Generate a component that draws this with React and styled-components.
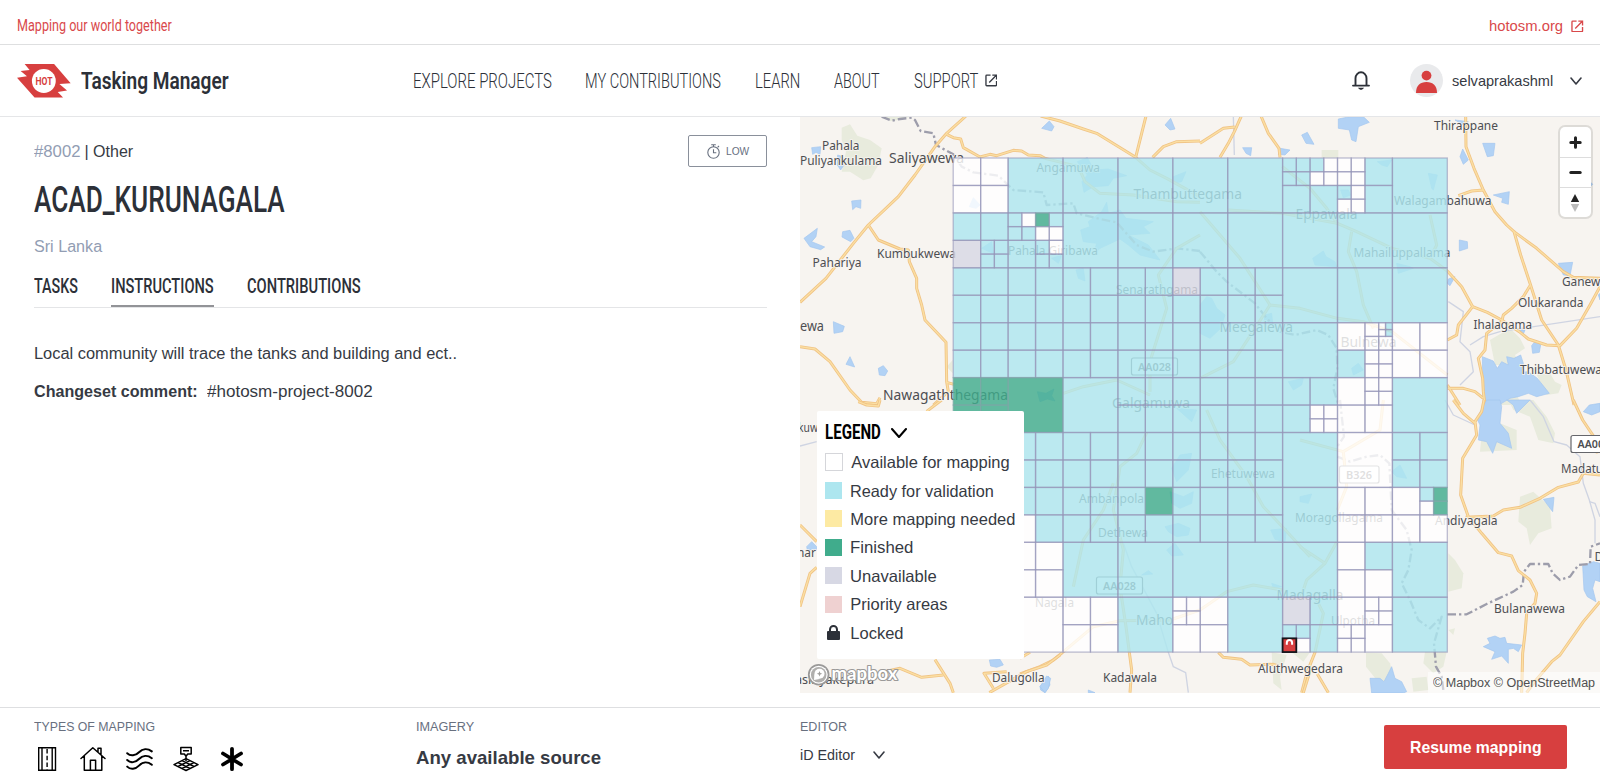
import React, { useLayoutEffect, useRef } from "react";
import styled, { createGlobalStyle } from "styled-components";

const GlobalStyle = createGlobalStyle`
  * { box-sizing: border-box; }
  body { margin: 0; background: #fff; color: #363a43; font-family: "Liberation Sans", Arial, sans-serif; overflow: hidden; }
`;

const condensed = `Roboto, "Liberation Sans", sans-serif`;

/* ---------- fitted text ---------- */
const FitBox = styled.span`
  display: block;
  flex: none;
  width: ${(p) => p.$w}px;
  height: ${(p) => p.$h || 20}px;
  line-height: ${(p) => p.$h || 20}px;
  white-space: nowrap;
  font-size: ${(p) => p.$size || 16}px;
  font-weight: ${(p) => p.$weight || 400};
  font-family: ${(p) => (p.$condensed ? condensed : "inherit")};
  color: ${(p) => p.$color || "inherit"};
`;
const FitInner = styled.span`
  display: inline-block;
  transform-origin: 0 50%;
`;
function Fit({ w, h, size, weight, narrow, color, children }) {
  const ref = useRef(null);
  useLayoutEffect(() => {
    const el = ref.current;
    el.style.transform = `scaleX(${w / el.offsetWidth})`;
  }, [w]);
  return (
    <FitBox $w={w} $h={h} $size={size} $weight={weight} $condensed={narrow} $color={color}>
      <FitInner ref={ref}>{children}</FitInner>
    </FitBox>
  );
}

/* ---------- shell ---------- */
const Page = styled.div`
  width: 1600px;
  height: 782px;
  display: flex;
  flex-direction: column;
  background: #fff;
`;
const TopBar = styled.div`
  height: 45px;
  flex: none;
  border-bottom: 1px solid #dedfe0;
  display: flex;
  align-items: center;
  justify-content: space-between;
  padding: 8px 16.5px 0 16.5px;
  color: #d9494b;
`;
const TopLink = styled.a`
  display: flex;
  align-items: center;
  gap: 8px;
`;
const Header = styled.header`
  height: 72px;
  flex: none;
  border-bottom: 1px solid #e5e6e8;
  display: flex;
  align-items: center;
  padding: 0 18px 0 17px;
`;
const Brand = styled.div`
  display: flex;
  align-items: center;
  gap: 9.5px;
  width: 395.5px;
`;
const Nav = styled.nav`
  display: flex;
  align-items: center;
  gap: 33.8px;
  flex: 1;
`;
const NavExternal = styled.span`
  display: flex;
  align-items: center;
  gap: 7px;
`;
const Account = styled.div`
  display: flex;
  align-items: center;
`;
const Avatar = styled.div`
  width: 33px;
  height: 33px;
  margin: 0 9px 0 40px;
  border-radius: 50%;
  overflow: hidden;
  background: #e9eaec;
`;
const UserChevron = styled.div`
  display: flex;
  margin-left: 17px;
`;

/* ---------- project details ---------- */
const Main = styled.main`
  display: flex;
  height: 576px;
  flex: none;
`;
const Details = styled.section`
  width: 800px;
  padding: 18px 33px 0 33.5px;
  display: flex;
  flex-direction: column;
`;
const MetaRow = styled.div`
  display: flex;
  justify-content: space-between;
  height: 32px;
  align-items: center;
`;
const Meta = styled.div`
  display: flex;
  gap: 4px;
  padding-top: 1px;
`;
const Difficulty = styled.div`
  width: 79px;
  height: 32px;
  border: 1px solid #8a909b;
  border-radius: 2px;
  display: flex;
  align-items: center;
  justify-content: center;
  gap: 6px;
`;
const TitleRow = styled.h1`
  margin: 11px 0 0;
  height: 44px;
  font-weight: 500;
`;
const Place = styled.div`
  margin-top: 15px;
  height: 20px;
`;
const Tabs = styled.div`
  display: flex;
  gap: 33.5px;
  height: 37px;
  margin-top: 14px;
  border-bottom: 1px solid #e4e5e7;
`;
const Tab = styled.div`
  height: 36px;
  padding-top: 3px;
  border-bottom: 2px solid ${(p) => (p.$active ? "#929397" : "transparent")};
`;
const Body = styled.div`
  padding-top: 36px;
  display: flex;
  flex-direction: column;
  gap: 17.5px;
`;
const Comment = styled.div`
  display: flex;
  gap: 9px;
`;

/* ---------- map ---------- */
const MapPane = styled.section`
  width: 800px;
  height: 576px;
  position: relative;
  overflow: hidden;
  background: #f7f4f0;
  svg { display: block; }
`;
const Legend = styled.div`
  position: absolute;
  left: 17px;
  top: 294px;
  width: 207px;
  height: 248px;
  background: #fff;
  border-radius: 2px;
  padding: 10px 8px;
`;
const LegendTitle = styled.div`
  display: flex;
  align-items: center;
  gap: 9.5px;
  height: 23px;
  margin-bottom: 4px;
  color: #000;
`;
const LegendRow = styled.div`
  display: flex;
  align-items: center;
  height: 28.4px;
  gap: 8.3px;
`;
const Swatch = styled.span`
  width: 17px;
  height: 17px;
  flex: none;
  background: ${(p) => p.$c};
  ${(p) => p.$outlined && "border: 1px solid #d5d6da; width: 18px; height: 18px;"}
`;
const SwatchIcon = styled.span`
  width: 17px;
  display: flex;
  justify-content: center;
`;
const Controls = styled.div`
  position: absolute;
  right: 9.5px;
  top: 10px;
  width: 31px;
  border-radius: 5px;
  background: #fff;
  box-shadow: 0 0 0 2px rgba(0, 0, 0, 0.1);
`;
const ControlButton = styled.div`
  height: 30px;
  display: flex;
  align-items: center;
  justify-content: center;
  & + & { border-top: 1px solid #ddd; }
`;
const Attribution = styled.div`
  position: absolute;
  right: 0;
  bottom: 0;
  height: 21px;
  padding: 1px 5px 0;
  background: rgba(255, 255, 255, 0.5);
`;

/* ---------- footer ---------- */
const Footer = styled.footer`
  margin-top: 14px;
  flex: 1;
  border-top: 1px solid #dedfe1;
  display: flex;
  padding: 9px 33px 0 33.5px;
`;
const FooterCol = styled.div`
  width: ${(p) => p.$w}px;
  flex: none;
`;
const TypeIcons = styled.div`
  display: flex;
  align-items: center;
  gap: 20px;
  margin-top: 9px;
`;
const Source = styled.div`
  margin-top: 8.5px;
`;
const EditorSelect = styled.div`
  display: flex;
  align-items: center;
  gap: 17px;
  margin-top: 8px;
`;
const ResumeButton = styled.button`
  width: 183px;
  height: 44px;
  margin: 7.5px 0 0 auto;
  padding: 0;
  border: 0;
  border-radius: 2px;
  background: #d73f3f;
  color: #fff;
  font-family: inherit;
  display: flex;
  align-items: center;
  justify-content: center;
`;

/* ---------- icons ---------- */
const ExternalIcon = ({ size = 12.5 }) => (
  <svg width={size} height={size} viewBox="0 0 13 13" fill="none" stroke="currentColor" strokeWidth="1.4">
    <path d="M5.8 1.2H1.8Q1 1.2 1 2V11.4Q1 12.2 1.8 12.2H11.2Q12 12.2 12 11.4V7.2M7.6 1.2H12V5.6M11.8 1.4L4.4 8.8" />
  </svg>
);
const Chevron = ({ w = 13, h = 8, sw = 1.6 }) => (
  <svg width={w} height={h} viewBox={`0 0 ${w} ${h}`} fill="none" stroke="currentColor" strokeWidth={sw} strokeLinecap="round" strokeLinejoin="round">
    <path d={`M1 1L${w / 2} ${h - 1}L${w - 1} 1`} />
  </svg>
);
const HotLogo = () => (
  <svg width="54" height="34" viewBox="0 0 163 102">
    <path fill="#d73f3f" d="M23 0H112L162 58L128 60L151 80L123 84L139 101H53L0 41L30 37L11 21L38 18Z" />
    <circle cx="81" cy="51" r="36" fill="#fff" />
    <text x="56" y="62" fontSize="32" fontWeight="700" fontFamily="Roboto" fill="#d73f3f" textLength="51" lengthAdjust="spacingAndGlyphs">HOT</text>
  </svg>
);
const BellIcon = () => (
  <svg width="18" height="20" viewBox="0 0 18 20" fill="none" stroke="#2c3038" strokeWidth="1.9" strokeLinecap="round">
    <path d="M1 14.6H17M3.5 14.3V7.2A5.5 5.9 0 0 1 14.5 7.2V14.3" />
    <path d="M7.2 17.4Q9 19.2 10.8 17.4Z" fill="#2c3038" strokeWidth="1.1" />
  </svg>
);
const PersonIcon = () => (
  <svg width="33" height="33" viewBox="0 0 33 33" fill="#d73f3f">
    <circle cx="16.5" cy="11.6" r="4.9" />
    <path d="M6 28.9C6 21.5 10 18 16.5 18S27 21.5 27 28.9Z" />
  </svg>
);
const TimerIcon = () => (
  <svg width="13" height="15" viewBox="0 0 13 15" fill="none" stroke="#68707f" strokeWidth="1.1">
    <circle cx="6.5" cy="8.5" r="5.7" />
    <path d="M4.2 .8H8.8M6.5 1V3M6.5 5.2V8.8H9.3M10.6 3.4L12 2" />
  </svg>
);
const LockIcon = () => (
  <svg width="13" height="15" viewBox="0 0 13 15">
    <rect y="6" width="13" height="9" rx="1" fill="#2c3038" />
    <path d="M3 7V4.4A3.5 3.4 0 0 1 10 4.4V7" fill="none" stroke="#2c3038" strokeWidth="2" />
  </svg>
);
const RoadIcon = () => (
  <svg width="26" height="26" viewBox="0 0 26 26" fill="none" stroke="#000" strokeWidth="1.4">
    <path d="M4.7 1.7H21.5V24.3H4.7ZM8 2V24M18.2 2V24" />
    <path d="M13.1 3V24" strokeDasharray="4.5 2.3" />
  </svg>
);
const HouseIcon = () => (
  <svg width="26" height="26" viewBox="0 0 26 26" fill="none" stroke="#000" strokeWidth="1.5" strokeLinejoin="round" strokeLinecap="round">
    <path d="M1 12.5L12.8 1.8L25 12.5M4.3 10V24.2H21.8V10M10.4 24V14.3H15.6V24M18 6V2.3H21V9" />
  </svg>
);
const WavesIcon = () => (
  <svg width="27" height="26" viewBox="0 0 27 26" fill="none" stroke="#000" strokeWidth="2" strokeLinecap="round">
    {[8, 14.8, 21.4].map((y) => (
      <path key={y} d={`M1.2 ${y - 0.8}C4.5 ${y + 2.6} 9.5 ${y + 1.8} 13 ${y - 1.8}S21.5 ${y - 6} 25.8 ${y - 2.6}`} />
    ))}
  </svg>
);
const LandUseIcon = () => (
  <svg width="26" height="26" viewBox="0 0 26 26" fill="none" stroke="#000" strokeWidth="1.5" strokeLinejoin="round">
    <path d="M7.8 1.5H18.2V8H14.7L13 10.2L11.4 8H7.8ZM10 4.7H16M13 10V15" />
    <path d="M13 12.6L25 18.6L13 24.5L1 18.6ZM9 14.6L21 20.5M5 16.6L17 22.5M17 14.6L5 20.5M21 16.6L9 22.5" />
  </svg>
);
const AsteriskIcon = () => (
  <svg width="26" height="26" viewBox="0 0 26 26" stroke="#000" strokeWidth="3.8" strokeLinecap="round">
    <path d="M13 2.8V23.2M4 7.5L22 18.5M22 7.5L4 18.5" />
  </svg>
);

/* ---------- base map data ---------- */
// each sheet of the base map is digitised at three units per pixel
const sheets = [
  {
    at: [800, 115],
    green: [
      "M125 38L150 28L172 62L210 75L245 100L235 150L212 190L190 196L150 170L125 170L138 110L125 75Z",
      "M245 3L340 3L290 16L270 18Z",
      "M440 755L458 735V775Z",
    ],
    water: [
      "M35 98L62 95L60 118L48 112L38 118Z",
      "M113 120L128 125L132 150L122 165L112 150Z",
      "M155 258L183 255L182 280L168 275L158 284Z",
      "M12 370L52 340L48 365L35 380L74 396L62 404L30 395Z",
      "M128 350L150 346L162 370L152 380L126 366Z",
      "M100 620L133 634L128 650L102 655Z",
      "M150 725L164 756L138 748Z",
      "M235 760L250 752L263 768L255 782L238 780Z",
      "M725 40L748 18L762 35L755 48Z",
      "M1095 30L1112 10L1125 42L1110 45Z",
      "M520 248L540 270L528 280L508 275Z",
      "M832 140L862 128L882 165L925 162L980 182L940 190L925 212L880 215L852 232L846 200L862 180Z",
      "M1120 185L1158 170L1145 200L1120 205Z",
      "M842 345L870 335L865 320L905 290L920 262L925 295L960 285L978 310L1060 320L1030 335L1050 355L985 360L1045 390L1080 435L1020 420L985 390L960 372L900 400L880 420L890 385L850 380Z",
      "M828 465L850 460L855 498L835 490Z",
      "M712 830L738 835L762 822L755 842L765 858L742 852L720 860Z",
      "M545 400L575 380L580 415Z",
      "M755 430L785 420L775 445Z",
    ],
    roads: [
      "M498 3L440 55L405 95L345 180L295 245L205 330L160 385L78 490L0 562",
      "M440 58L460 68L482 72L490 98L540 126L570 118L590 122L640 106L665 108L685 120L720 122L735 130",
      "M722 3L780 18L850 42L890 55L1007 127L1038 3",
      "M1058 127L1090 95L1130 80L1200 78",
      "M205 330L235 375L300 402L325 405L328 440L350 490L350 520L365 570L375 615L438 682L440 800L445 830L400 870",
      "M0 695L45 702L90 740L150 825L185 862L230 866L240 848",
      "M440 802L462 808",
      "M735 130L835 155L855 200L900 235L1000 240L1130 260L1200 262",
      "M1007 127L1050 165L1100 190L1200 245",
      "M1200 360L1130 400L1075 480L1100 580L1075 660L1050 740L1050 830",
      "M790 835L850 815L950 795L1050 840",
    ],
    borders: ["M245 5L275 17L300 12L335 8L345 15L362 48L400 55L408 90L460 118L485 155L520 172L595 182L640 225L730 232L740 270L820 265L830 295L900 312L950 322L1010 390L1060 410L1130 400L1200 408"],
    thin: [],
  },
  {
    at: [1200, 115],
    green: ["M365 105H415V128H365Z", "M870 675L930 640L960 670L975 700L945 720L960 750L885 750Z", "M1010 780L1050 775L1065 800L1085 810L1075 835L1040 840Z", "M890 850L950 840L965 870H890Z"],
    water: [
      "M415 12L450 5L490 5L508 22L475 35L468 80L455 75L448 45L415 40Z",
      "M305 60L322 52L342 88L318 85Z",
      "M128 98L155 98L152 122L138 115Z",
      "M240 100L270 105L255 120L235 118Z",
      "M765 15L805 20L790 30Z",
      "M848 85L885 85L880 122L862 125Z",
      "M788 102L805 135L790 148L780 125Z",
      "M880 240L928 230L925 268L905 262L908 250Z",
      "M778 375L802 380L803 400L778 408Z",
      "M1075 445L1118 442L1110 482L1090 480Z",
      "M745 492L765 485L750 512L742 505Z",
      "M995 692L1008 675L1022 690L1018 712L998 715Z",
      "M955 645L975 645L968 662Z",
      "M847 725L880 738L892 760L905 740L925 750L920 725L942 730L962 720L970 745L965 772L985 770L1012 790L1048 835L1010 845L985 835L955 845L930 850L905 865L900 870H850Z",
      "M338 430L370 408L378 425L405 440L410 455L345 450Z",
      "M590 445L630 455L640 460L595 475Z",
      "M685 175L712 180L700 225L695 220Z",
      "M0 570L20 545L35 550L50 580L75 600L62 640L30 670L0 655Z",
      "M195 600L215 595L218 625L192 622Z",
      "M265 800L310 790L305 810L280 825Z",
      "M422 225L445 225L452 240L430 248Z",
      "M455 760L475 745L490 765L460 780Z",
      "M532 140L575 135L562 155L545 150Z",
      "M1170 200L1178 208L1170 215Z", "M1195 540L1200 535V555Z",
    ],
    roads: [
      "M124 3L103 50L85 85L60 127", "M0 85L70 40L104 36", "M183 3L205 55L237 100L240 127",
      "M797 3L798 95L822 160L850 225L885 290L920 330L942 350L962 420L990 505L1025 615L1075 690L1098 765L1122 870",
      "M775 242L815 228L850 225", "M942 350L1010 400L1090 470L1120 487L1200 490",
      "M742 468L785 515L818 575L862 592L905 615L958 650L985 672L1040 690L1080 692L1130 640L1170 570L1200 515",
      "M990 512L970 545L935 580L910 600L905 620L860 655L855 705L835 730L848 790L850 830L855 870",
      "M818 575L775 630L770 660L742 675", "M742 810L780 870", "M742 820L790 820L825 830L850 850",
      "M85 285L170 290L247 295L412 325L470 350L576 400L690 430L742 468",
      "M0 290L60 360L120 430L165 500L210 570L300 580L412 610L490 620L576 650L742 780",
      "M247 155L330 220L380 280L412 325", "M455 350L445 410L470 470L490 570L520 640",
      "M690 300L710 390L690 430", "M0 790L100 740L165 640L210 570",
    ],
    borders: ["M0 410L50 470L80 500L165 565L200 610L240 650L285 660L350 645L385 660L410 700L412 760L400 820L415 870"],
    thin: ["M100 3L103 120", "M745 560L790 590L780 680L810 710L820 770L780 810", "M810 690L850 665L900 650L1200 605"],
  },
  {
    at: [1300, 400],
    green: ["M445 460L465 480L490 520L485 565L445 575Z", "M660 290L700 275L750 320L755 385L715 400L690 435L680 385L655 365Z", "M198 758L245 760L270 790L285 850L230 840L198 800Z", "M375 755L440 757L430 800L400 820L370 790Z", "M335 835L380 830L385 870L340 875Z", "M545 100L600 70L650 90L650 150L540 155Z", "M625 0L700 0L740 50L765 100L760 130L715 120L690 50L640 30Z", "M445 690L465 685L460 705Z"],
    water: [
      "M560 0L600 0L605 20L600 70L625 100L635 145L590 125L578 160L560 125L535 120L540 75L530 55Z",
      "M620 0L690 0L650 40L640 15Z",
      "M550 740L570 730L562 715L585 708L600 715L615 712L620 730L665 735L655 755L640 745L625 748L625 790L605 768L575 778L585 755Z",
      "M210 835L240 835L252 845L265 820L275 800L285 835L305 845L320 875L310 879H215Z",
      "M730 298L762 292L758 335Z",
      "M848 498L880 485L900 490V545L885 540L878 565L888 605L862 590L852 570Z",
      "M850 35L868 15L900 10V35L875 45Z",
      "M275 215L300 195L320 235L290 230Z",
      "M0 290L35 282L25 310L0 305Z",
    ],
    roads: [
      "M552 0L545 35L525 65L530 105L488 175L482 285L505 350L545 400L595 458L635 468L655 512L690 540L710 580L705 610L680 640L675 700L668 760L665 878",
      "M497 352L580 348L610 330L660 322L720 295L775 262L835 246L850 220L900 225",
      "M460 0L490 40L525 70", "M820 0L848 60L885 115L892 160", "M900 605L850 665L780 765L755 785L700 850L680 878",
      "M45 757L20 820L5 878M52 822L85 878", "M0 120L130 155L240 90L250 0M130 155L140 260L112 330",
      "M0 440L75 490L110 427M75 490L20 540L0 600", "M40 580L70 640L45 757",
    ],
    borders: [
      "M442 643H500L560 612L640 575L668 555L672 515L690 492L745 492L758 520L780 540L810 530L835 495L870 492L872 440L900 430",
      "M112 170L150 185L200 170L240 165L268 190L275 330L320 390L335 450L325 510L305 550L330 600L355 660L390 685L425 650L402 730L408 800L425 830L430 870",
      "M120 0L132 110L105 150",
    ],
    thin: ["M435 0L460 45L525 75", "M690 0L730 50L762 125L800 135L840 170L850 250L868 300L885 360V430", "M868 305L885 310L900 350"],
  },
  {
    at: [1020, 400],
    green: ["M755 757L800 765L780 830L785 870L760 850Z", "M815 757L870 757L850 785Z"],
    water: [
      "M60 860L85 828L90 855L75 878L62 870Z", "M205 870L225 878H205Z",
      "M455 205L480 165L515 160L505 210L470 245Z", "M450 275L490 290L520 275L515 310L480 325L455 310Z",
      "M435 380L475 370L510 385L505 405L470 410L445 395Z", "M440 450L465 430L490 465L455 468Z",
      "M470 25L530 30L515 65Z", "M752 390L800 385L795 425L765 418Z", "M755 550L785 560L760 565Z", "M365 525L385 512L398 522Z",
    ],
    roads: [
      "M0 775L30 757M0 822L60 800L100 780L128 757", "M328 757L335 810L330 878", "M595 757L610 772L665 778L690 795L760 793L775 797",
      "M850 878L865 830L872 800", "M380 98L350 160L300 200L280 330L310 450L300 560L318 680L328 757",
      "M160 560L190 420L250 330L280 250", "M128 757L220 680L300 662L450 660L540 630L620 575L700 555L787 570",
      "M560 30L600 120L680 230L730 320L787 380L870 470",
    ],
    borders: [],
    thin: ["M445 757L460 800L497 818L505 878", "M310 430L335 500L410 640L445 757"],
  },
  {
    at: [780, 400],
    green: [],
    water: ["M80 440L95 425L110 440V450H82Z", "M628 780L660 778L670 795L650 802L632 798Z", "M780 860L800 828L812 835L805 865L795 878Z"],
    roads: [
      "M60 375L110 425M60 620L90 520L110 502", "M235 5L260 15L295 18L300 0M440 34L485 0",
      "M465 779L510 850L520 878", "M300 818L360 805L425 832L490 825", "M628 878L740 815L800 795L840 765M640 865L612 820L680 815",
    ],
    borders: [],
    thin: ["M60 138L110 125"],
  },
];

const BaseMap = () =>
  sheets.map((s, i) => (
    <g key={i} transform={`translate(${s.at[0]} ${s.at[1]}) scale(.33333)`} fill="none" strokeLinejoin="round">
      {s.green.map((d) => <path key={d} d={d} fill="#e8ebdd" />)}
      {s.thin.map((d) => <path key={d} d={d} stroke="#cfd4e2" strokeWidth="4" />)}
      {s.water.map((d) => <path key={d} d={d} fill="#b2d2f5" stroke="#a3c6ef" strokeWidth="2" />)}
      {s.borders.map((d) => <path key={d} d={d} stroke="#9d9dab" strokeWidth="7" strokeDasharray="26 9 7 9" />)}
      {s.roads.map((d) => <path key={d} d={d} stroke="#f0c385" strokeWidth="9" />)}
      {s.roads.map((d) => <path key={d} d={d} stroke="#fbdfa3" strokeWidth="4" />)}
    </g>
  ));

// [text, x, baseline, width, font size]
const places = [
  ["Pahala", 822, 149.5, 37.5, 12.5], ["Puliyankulama", 800, 164.5, 82, 12.5], ["Saliyawewa", 889, 162.5, 75, 14],
  ["Kumbukwewa", 877, 257.5, 79, 12.5], ["Pahariya", 812.5, 266.5, 49, 12.5], ["ewa", 800, 330.5, 24, 14],
  ["Nawagaththegama", 883, 399.5, 125, 14], ["Angamuwa", 1036.5, 172, 63.5, 12.5], ["Thambuttegama", 1133.5, 199, 108.5, 14],
  ["Pahala Giribawa", 1008, 255, 90, 12.5], ["Senarathgama", 1116, 293.5, 82, 12.5], ["Galgamuwa", 1112, 407.5, 78, 14],
  ["Thirappane", 1434, 130, 64, 12.5], ["Walagambahuwa", 1394, 204.5, 97.5, 12.5], ["Eppawala", 1295.5, 218.5, 62, 14],
  ["Mahailuppallama", 1353.5, 257, 97, 12.5], ["Meegalewa", 1219.5, 332, 73.5, 14], ["Bulnewa", 1340.5, 347, 56, 14],
  ["Ganewa", 1562, 286, 45, 12.5], ["Olukaranda", 1518, 307, 65.5, 12.5], ["Ihalagama", 1473.5, 328.5, 58.5, 12.5],
  ["Thibbatuwewa", 1520, 373.5, 82, 12.5], ["Ehetuwewa", 1211, 478, 64, 12.5], ["Ambanpola", 1079, 502.5, 65, 12.5],
  ["Dethewa", 1098, 537, 50, 12.5], ["Nagala", 1035, 607, 39, 12.5], ["Maho", 1136, 624.5, 37, 14],
  ["Madagalla", 1276.5, 600, 67, 14], ["Moragollagama", 1295, 521.5, 88, 12.5], ["Ulpotha", 1331, 624.5, 44, 12.5],
  ["Andiyagala", 1435, 525, 62.5, 12.5], ["Madatu", 1561, 472.5, 42, 12.5], ["Bulanawewa", 1494, 613, 71, 12.5],
  ["Aluthwegedara", 1258, 673, 85, 12.5], ["Kadawala", 1103, 681.5, 54, 12.5], ["Dalugolla", 992, 681.5, 52.5, 12.5],
  ["kuw", 798, 432, 20, 12.5], ["nar", 797, 557, 19, 12.5], ["asinyakepura", 795, 684, 79, 12.5], ["D", 1594.5, 561, 9, 12.5],
];
const shields = [["AA028", 1131.5, 358, 46, 17], ["AA028", 1096.5, 577, 46, 17], ["B326", 1339.5, 466, 39.5, 17], ["AA00", 1571, 435.5, 46, 17]];

/* ---------- task grid ---------- */
// r ready, w available, g finished, u unavailable, L locked; brackets split a square in four
const taskRows = [
  "[wwww] r r r r r [[rrrr][rwww]rr] [[wwww]r[rwww]r] r",
  "[rru[rrrr]] [[rwrr][grww]r[rwrr]] r r r r r r r",
  "[rrrr] [rrrr] [rrrr] [rrrr] [urrr] [rrrr] r r r",
  "[rrrr] [rrrr] [rrrr] [rrrr] [rrrr] [rrrr] r [w[w[wrwr]ww]r[wwww]] [wwww]",
  "[gggg] g r [rrrr] [rrrr] [rrrr] [rrr[wwww]] [w[wwww]ww] r",
  "[rrrr] [rrrr] [rrrr] [rrrr] [rrrr] [rrrr] r w [rrrr]",
  "[rrrr] [rrwr] [rrrr] [rgrr] [rrrr] [rrrr] r [wwww] [w[rgwg]ww]",
  "[wwww] [wwww] r r r r r [wrww] r",
  "w w [wwww] r [[wwww]www] r [ur[rrLw]r] [w[wwww][wwww]w] r",
];
const fills = { r: "#ade6ef", w: "#ffffff", g: "#40ac8c", u: "#d7d8e4", L: "#ffffff" };
const BIG = 54.9;
const X0 = 953.2;
const Y0 = 158;

function parseTasks(code, x, y, size, out) {
  let i = 0;
  const walk = (px, py, s) => {
    if (code[i] === "[") {
      i += 1;
      const h = s / 2;
      walk(px, py, h);
      walk(px + h, py, h);
      walk(px, py + h, h);
      walk(px + h, py + h, h);
      i += 1;
    } else {
      out.push({ x: px, y: py, s, k: code[i] });
      i += 1;
    }
  };
  walk(x, y, size);
}
const tasks = [];
taskRows.forEach((row, r) => row.split(" ").forEach((code, c) => parseTasks(code, X0 + c * BIG, Y0 + r * BIG, BIG, tasks)));
const locked = tasks.find((t) => t.k === "L");

const MapDrawing = () => (
  <svg width="800" height="576" viewBox="800 117 800 576">
    <BaseMap />
    <g fontFamily='"Noto Sans", "Open Sans", sans-serif' fill="#4d4e52">
      {places.map(([t, x, y, w, size]) => (
        <text key={t + x} x={x} y={y} fontSize={size} textLength={w} lengthAdjust="spacingAndGlyphs" stroke="#f7f4f0" strokeWidth="1.6" paintOrder="stroke">{t}</text>
      ))}
      {shields.map(([t, x, y, w, h]) => (
        <g key={t + y}>
          <rect x={x} y={y} width={w} height={h} rx="2" fill="#fff" stroke="#65666b" strokeWidth="1.2" />
          <text x={x + 6.5} y={y + 12.7} fontSize="11" fontWeight="600" textLength={t === "AA028" ? 33 : t === "B326" ? 26 : 26.5} lengthAdjust="spacingAndGlyphs">{t}</text>
        </g>
      ))}
    </g>
    {tasks.map((t, i) => (
      <rect key={i} x={t.x} y={t.y} width={t.s} height={t.s} fill={fills[t.k]} fillOpacity=".82" />
    ))}
    {tasks.map((t, i) => (
      <rect key={i} x={t.x} y={t.y} width={t.s} height={t.s} fill="none" stroke={t.k === "g" ? "#7ba7a6" : "#9594b8"} strokeOpacity=".62" strokeWidth="1.3" />
    ))}
    <g transform={`translate(${locked.x} ${locked.y})`}>
      <rect width="13.7" height="13.7" fill="#d73f3f" stroke="#14161c" strokeWidth="1.8" />
      <path d="M4.2 6.4V4.3A2.65 2.8 0 0 1 9.5 4.3V6.4" fill="none" stroke="#fff" strokeWidth="2" />
    </g>
    <g fill="#fff" stroke="#9b9a99" paintOrder="stroke">
      <circle cx="818.7" cy="674.7" r="9" strokeWidth="3.6" />
      <circle cx="818.7" cy="674.7" r="7.8" fill="#b0afad" stroke="none" />
      <circle cx="819.5" cy="673.7" r="5" stroke="none" />
      <path d="M814 680L814.4 674L819.5 679Z" stroke="none" />
      <path d="M819.5 671L820.3 673L822.2 673.7L820.3 674.5L819.5 676.4L818.7 674.5L816.8 673.7L818.7 673Z" fill="#a09f9d" stroke="none" />
      <text x="831.5" y="680.2" fontFamily="Lato" fontWeight="700" fontSize="18" textLength="66" lengthAdjust="spacingAndGlyphs" strokeWidth="2.2" strokeLinejoin="round">mapbox</text>
    </g>
  </svg>
);

const legend = [
  ["Available for mapping", "#fff", 158, true],
  ["Ready for validation", "#ade6ef", 144],
  ["More mapping needed", "#fdeaa3", 165],
  ["Finished", "#40ac8c", 63],
  ["Unavailable", "#d7d8e4", 86.5],
  ["Priority areas", "#efd1d1", 97],
];

const label = { size: 12, color: "#68707f", h: 20 };
const nav = { narrow: true, size: 21, h: 28, weight: 300, color: "#2c3038" };
const tab = { narrow: true, size: 21, h: 24, weight: 500, color: "#2c3038" };

export default function App() {
  return (
    <Page>
      <GlobalStyle />
      <TopBar>
        <Fit w={155} size={16} narrow>Mapping our world together</Fit>
        <TopLink>
          <Fit w={74.5} size={15.5}>hotosm.org</Fit>
          <ExternalIcon />
        </TopLink>
      </TopBar>
      <Header>
        <Brand>
          <HotLogo />
          <Fit w={148} size={24.5} h={30} weight={600} narrow color="#2c3038">Tasking Manager</Fit>
        </Brand>
        <Nav>
          <Fit {...nav} w={139}>EXPLORE PROJECTS</Fit>
          <Fit {...nav} w={136}>MY CONTRIBUTIONS</Fit>
          <Fit {...nav} w={45}>LEARN</Fit>
          <Fit {...nav} w={46}>ABOUT</Fit>
          <NavExternal>
            <Fit {...nav} w={64}>SUPPORT</Fit>
            <ExternalIcon />
          </NavExternal>
        </Nav>
        <Account>
          <BellIcon />
          <Avatar><PersonIcon /></Avatar>
          <Fit w={101} size={15}>selvaprakashml</Fit>
          <UserChevron><Chevron w={12} /></UserChevron>
        </Account>
      </Header>

      <Main>
        <Details>
          <MetaRow>
            <Meta>
              <Fit w={47} size={16} color="#929db3">#8002</Fit>
              <Fit w={49} size={16}>| Other</Fit>
            </Meta>
            <Difficulty>
              <TimerIcon />
              <Fit w={23} size={11.5} color="#68707f">LOW</Fit>
            </Difficulty>
          </MetaRow>
          <TitleRow>
            <Fit w={251} size={36} h={44} weight={500} narrow color="#2c3038">ACAD_KURUNAGALA</Fit>
          </TitleRow>
          <Place><Fit w={68.5} size={16} color="#929db3">Sri Lanka</Fit></Place>
          <Tabs>
            <Tab><Fit {...tab} w={43.5}>TASKS</Fit></Tab>
            <Tab $active><Fit {...tab} w={103}>INSTRUCTIONS</Fit></Tab>
            <Tab><Fit {...tab} w={114}>CONTRIBUTIONS</Fit></Tab>
          </Tabs>
          <Body>
            <Fit w={423.5} size={16}>Local community will trace the tanks and building and ect..</Fit>
            <Comment>
              <Fit w={164} size={16} weight={700}>Changeset comment:</Fit>
              <Fit w={166} size={16}>#hotosm-project-8002</Fit>
            </Comment>
          </Body>
        </Details>

        <MapPane>
          <MapDrawing />
          <Legend>
            <LegendTitle>
              <Fit w={56} size={21} h={27} weight={700} narrow>LEGEND</Fit>
              <Chevron w={16} h={10} sw={2} />
            </LegendTitle>
            {legend.map(([text, color, w, outlined]) => (
              <LegendRow key={text}>
                <Swatch $c={color} $outlined={outlined} />
                <Fit w={w} size={16.5}>{text}</Fit>
              </LegendRow>
            ))}
            <LegendRow>
              <SwatchIcon><LockIcon /></SwatchIcon>
              <Fit w={53} size={16.5}>Locked</Fit>
            </LegendRow>
          </Legend>
          <Controls>
            <ControlButton>
              <svg width="13" height="13" stroke="#222" strokeWidth="3" strokeLinecap="round"><path d="M1.8 6.5H11.2M6.5 1.8V11.2" /></svg>
            </ControlButton>
            <ControlButton>
              <svg width="13" height="13" stroke="#222" strokeWidth="3" strokeLinecap="round"><path d="M1.8 6.5H11.2" /></svg>
            </ControlButton>
            <ControlButton>
              <svg width="10" height="20"><path d="M5 1L9.2 9H.8Z" fill="#222" /><path d="M5 19L9.2 11H.8Z" fill="#bbb" /></svg>
            </ControlButton>
          </Controls>
          <Attribution>
            <Fit w={162} size={12} color="#505050">© Mapbox © OpenStreetMap</Fit>
          </Attribution>
        </MapPane>
      </Main>

      <Footer>
        <FooterCol $w={382.5}>
          <Fit {...label} w={121}>TYPES OF MAPPING</Fit>
          <TypeIcons>
            <RoadIcon /><HouseIcon /><WavesIcon /><LandUseIcon /><AsteriskIcon />
          </TypeIcons>
        </FooterCol>
        <FooterCol $w={384}>
          <Fit {...label} w={58}>IMAGERY</Fit>
          <Source><Fit w={185} size={18.5} h={24} weight={700}>Any available source</Fit></Source>
        </FooterCol>
        <FooterCol $w={200}>
          <Fit {...label} w={47}>EDITOR</Fit>
          <EditorSelect>
            <Fit w={55.5} size={15}>iD Editor</Fit>
            <Chevron w={12} />
          </EditorSelect>
        </FooterCol>
        <ResumeButton><Fit w={132} size={16.5} weight={700}>Resume mapping</Fit></ResumeButton>
      </Footer>
    </Page>
  );
}
